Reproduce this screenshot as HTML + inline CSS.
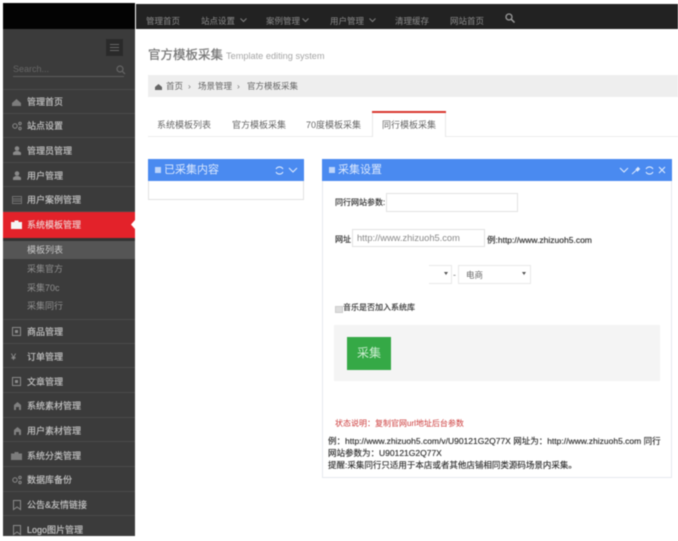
<!DOCTYPE html>
<html lang="zh"><head><meta charset="utf-8"><title>官方模板采集</title>
<style>
html,body{margin:0;padding:0;background:#fff}
body{width:678px;height:536px;overflow:hidden;position:relative;font-family:"Liberation Sans","Noto Sans CJK SC",sans-serif;}
#w{position:absolute;inset:0;filter:blur(.6px)}
.a{position:absolute;white-space:nowrap}
.m{position:absolute;left:3px;width:132px;height:24px;border-bottom:1px solid #4a4a4a;box-sizing:border-box}
.t{position:absolute;white-space:nowrap;left:27px;font-size:9px;line-height:12px;color:#c2c2c2;text-shadow:0 0 .5px #c2c2c2}
.s{position:absolute;white-space:nowrap;left:27px;font-size:9px;line-height:12px;color:#8f8f8f}
.n{position:absolute;top:11px;font-size:8.500px;line-height:12px;color:#8a8a8a;white-space:nowrap}
svg{position:absolute;overflow:visible}
.i{fill:none;stroke:#8a8a8a;stroke-width:1}
.v{fill:none;stroke:#808080;stroke-width:1}
.tab{position:absolute;top:119px;font-size:9px;line-height:12px;color:#666;white-space:nowrap}
.h{position:absolute;background:#4a8af0;top:159px;height:22px}
.l{position:absolute;font-size:8px;line-height:12px;color:#333;white-space:nowrap;text-shadow:0 0 .5px #555}
.box{position:absolute;background:#fff;border:1px solid #e2e2e2;box-sizing:border-box}
</style></head><body><div id="w">
<div class="a" style="left:3px;top:29px;width:132px;height:507px;background:#3b3b3b"></div>
<div class="a" style="left:3px;top:3px;width:132px;height:26px;background:#030303"></div>
<div class="a" style="left:136px;top:4px;width:542px;height:25px;background:#222"></div>
<div class="a" style="left:106px;top:39px;width:17px;height:17px;background:#2a2a2a"></div>
<div class="a" style="left:110px;top:44px;width:9px;height:7px;border-top:1px solid #666;border-bottom:1px solid #666;box-sizing:border-box"></div>
<div class="a" style="left:110px;top:47px;width:9px;height:1px;background:#666"></div>
<div class="a" style="left:13px;top:63px;font-size:9px;line-height:12px;color:#666">Search...</div>
<div class="a" style="left:13px;top:76px;width:111px;height:1px;background:#5c5c5c"></div>
<svg style="left:116px;top:65px" width="9" height="9"><circle cx="4" cy="4" r="3" fill="none" stroke="#666" stroke-width="1.200"/><path d="M6 6l3 3" stroke="#666" stroke-width="1.200"/></svg>
<div class="a" style="left:3px;top:89px;width:132px;height:1px;background:#4a4a4a"></div>

<div class="m" style="top:90px"><svg style="left:9px;top:9px" width="9" height="7"><path d="M0 4L4.500 0L9 4V7H0Z" fill="#7c7c7c"/></svg></div><div class="t" style="top:96px">管理首页</div>
<div class="m" style="top:114px"><svg style="left:9px;top:8px" width="10" height="8"><circle cx="3" cy="4" r="2.200" class="i"/><circle cx="8" cy="1.500" r="1.200" class="i"/><circle cx="8" cy="6.500" r="1.200" class="i"/></svg></div><div class="t" style="top:120px">站点设置</div>
<div class="m" style="top:139px"><svg style="left:10px;top:7px" width="8" height="9"><circle cx="4" cy="2.500" r="2.300" fill="#8a8a8a"/><path d="M0 9V6.500L2.500 5H5.500L8 6.500V9Z" fill="#8a8a8a"/></svg></div><div class="t" style="top:145px">管理员管理</div>
<div class="m" style="top:163px"><svg style="left:10px;top:8px" width="8" height="9"><circle cx="4" cy="2.500" r="2.300" fill="#8a8a8a"/><path d="M0 9V6.500L2.500 5H5.500L8 6.500V9Z" fill="#8a8a8a"/></svg></div><div class="t" style="top:170px">用户管理</div>
<div class="m" style="top:188px"><svg style="left:9px;top:8px" width="10" height="8"><rect x=".5" y=".5" width="9" height="7" fill="none" stroke="#707070"/><path d="M.5 3h9M.5 5h9" stroke="#707070"/></svg></div><div class="t" style="top:194px">用户案例管理</div>
<div class="a" style="left:3px;top:212px;width:132px;height:26px;background:#e3222a"></div>
<svg style="left:11px;top:220px" width="11" height="9"><path d="M0 2H3.500V.5H7.500V2H11V9H0Z" fill="#f4f4f4"/></svg>
<div class="t" style="top:219px;color:#eec8c8;text-shadow:0 0 .5px #eec8c8">系统模板管理</div>
<svg style="left:131px;top:220px" width="4" height="9"><path d="M4 0L0 4.500L4 9Z" fill="#fff"/></svg>
<div class="a" style="left:3px;top:238px;width:132px;height:3px;background:#333"></div>
<div class="a" style="left:3px;top:241px;width:132px;height:18px;background:#555"></div>
<div class="s" style="top:244px;color:#c8c8c8">模板列表</div>
<div class="s" style="top:263px">采集官方</div>
<div class="s" style="top:282px">采集70c</div>
<div class="s" style="top:300px">采集同行</div>
<div class="a" style="left:3px;top:319px;width:132px;height:1px;background:#4a4a4a"></div>
<div class="m" style="top:320px"><svg style="left:9px;top:7px" width="9" height="9"><rect x=".5" y=".5" width="8" height="8" class="i"/><rect x="3" y="3" width="3" height="3" fill="#8a8a8a"/></svg></div><div class="t" style="top:326px">商品管理</div>
<div class="m" style="top:344px"><div class="a" style="left:8px;top:7px;font-size:9px;line-height:12px;color:#999">¥</div></div><div class="t" style="top:351px">订单管理</div>
<div class="m" style="top:369px"><svg style="left:9px;top:8px" width="9" height="9"><rect x=".5" y=".5" width="8" height="8" class="i"/><rect x="3" y="3" width="3" height="3" fill="#8a8a8a"/></svg></div><div class="t" style="top:376px">文章管理</div>
<div class="m" style="top:394px"><svg style="left:10px;top:8px" width="9" height="8"><path d="M1 8V3L4.500 0L8 3V8H6V5H3V8Z" fill="#808080"/></svg></div><div class="t" style="top:400px">系统素材管理</div>
<div class="m" style="top:418px"><svg style="left:10px;top:9px" width="9" height="8"><path d="M1 8V3L4.500 0L8 3V8H6V5H3V8Z" fill="#808080"/></svg></div><div class="t" style="top:425px">用户素材管理</div>
<div class="m" style="top:443px"><svg style="left:8px;top:9px" width="11" height="8"><path d="M0 1.500H3.500V0H7.500V1.500H11V8H0Z" fill="#7c7c7c"/></svg></div><div class="t" style="top:450px">系统分类管理</div>
<div class="m" style="top:468px"><svg style="left:9px;top:8px" width="10" height="8"><circle cx="3" cy="4" r="2.200" class="i"/><circle cx="8" cy="1.500" r="1.200" class="i"/><circle cx="8" cy="6.500" r="1.200" class="i"/></svg></div><div class="t" style="top:474px">数据库备份</div>
<div class="m" style="top:492px"><svg style="left:10px;top:8px" width="8" height="10"><path d="M.5.500H7.500V9.500L4 7L.5 9.500Z" class="i"/></svg></div><div class="t" style="top:499px">公告&amp;友情链接</div>
<div class="m" style="top:517px;border:0"><svg style="left:10px;top:8px" width="8" height="10"><path d="M.5.500H7.500V9.500L4 7L.5 9.500Z" class="i"/></svg></div><div class="t" style="top:524px">Logo图片管理</div>

<div class="a" style="left:136px;top:4px;width:542px;height:25px">
<div class="n" style="left:10px">管理首页</div>
<div class="n" style="left:65px">站点设置</div><svg style="left:104px;top:14px" width="7" height="5"><path d="M.5.500L3.500 3.500L6.500.5" class="v"/></svg>
<div class="n" style="left:130px">案例管理</div><svg style="left:166px;top:14px" width="7" height="5"><path d="M.5.500L3.500 3.500L6.500.5" class="v"/></svg>
<div class="n" style="left:194px">用户管理</div><svg style="left:233px;top:14px" width="7" height="5"><path d="M.5.500L3.500 3.500L6.500.5" class="v"/></svg>
<div class="n" style="left:259px">清理缓存</div>
<div class="n" style="left:314px">网站首页</div>
<svg style="left:369px;top:9px" width="10" height="10"><circle cx="4" cy="4" r="3" fill="none" stroke="#999" stroke-width="1.300"/><path d="M6.200 6.200L9.500 9.500" stroke="#999" stroke-width="1.500"/></svg>
</div>

<div class="a" style="left:148px;top:45px;font-size:12.500px;line-height:20px;color:#777;text-shadow:0 0 .6px #777">官方模板采集</div>
<div class="a" style="left:226px;top:46px;font-size:9.200px;line-height:20px;color:#a5a5a5">Template editing system</div>
<div class="a" style="left:148px;top:75px;width:530px;height:22px;background:#eee"></div>
<svg style="left:155px;top:84px" width="7" height="6"><path d="M0 3L3.500 0L7 3V6H0Z" fill="#666"/></svg>
<div class="a" style="left:166px;top:80px;font-size:8.500px;line-height:12px;color:#666">首页</div>
<div class="a" style="left:188px;top:80px;font-size:8.500px;line-height:12px;color:#777">›</div>
<div class="a" style="left:198px;top:80px;font-size:8.500px;line-height:12px;color:#666">场景管理</div>
<div class="a" style="left:237px;top:80px;font-size:8.500px;line-height:12px;color:#777">›</div>
<div class="a" style="left:247px;top:80px;font-size:8.500px;line-height:12px;color:#666">官方模板采集</div>

<div class="a" style="left:148px;top:136px;width:530px;height:1px;background:#ececec"></div>
<div class="tab" style="left:157px">系统模板列表</div>
<div class="tab" style="left:232px">官方模板采集</div>
<div class="tab" style="left:306px">70度模板采集</div>
<div class="a" style="left:372px;top:111px;width:74px;height:26px;background:#fff;border:1px solid #e8e8e8;border-top:0;border-bottom:0;box-sizing:border-box"></div>
<div class="a" style="left:372px;top:111px;width:74px;height:2px;background:#d9372f"></div>
<div class="tab" style="left:382px">同行模板采集</div>

<div class="box" style="left:148px;top:159px;width:156px;height:41px"></div>
<div class="h" style="left:148px;width:156px"></div>
<div class="a" style="left:155px;top:167px;width:6px;height:6px;background:#bcd4fa"></div>
<div class="a" style="left:164px;top:162px;font-size:11px;line-height:16px;color:#dbe8fd">已采集内容</div>
<svg style="left:275px;top:166px" width="9" height="9"><path d="M8 3A4 4 0 0 0 1 3M1 6A4 4 0 0 0 8 6" fill="none" stroke="#dbe8fd" stroke-width="1.100"/></svg>
<svg style="left:288px;top:167px" width="10" height="6"><path d="M1 1L5 5L9 1" fill="none" stroke="#dbe8fd" stroke-width="1.100"/></svg>

<div class="box" style="left:322px;top:159px;width:350px;height:319px;border-color:#e6e9ee"></div>
<div class="h" style="left:322px;width:350px"></div>
<div class="a" style="left:329px;top:167px;width:6px;height:6px;background:#bcd4fa"></div>
<div class="a" style="left:338px;top:162px;font-size:11px;line-height:16px;color:#dbe8fd">采集设置</div>
<svg style="left:619px;top:167px" width="10" height="6"><path d="M1 1L5 5L9 1" fill="none" stroke="#dbe8fd" stroke-width="1.100"/></svg>
<svg style="left:632px;top:167px" width="8" height="7"><path d="M0 7L4 3.500M5 1L7 3M4 2.500L6 .5L7.500 2L5.500 4Z" fill="#dbe8fd" stroke="#dbe8fd"/></svg>
<svg style="left:645px;top:166px" width="9" height="9"><path d="M8 3A4 4 0 0 0 1 3M1 6A4 4 0 0 0 8 6" fill="none" stroke="#dbe8fd" stroke-width="1.100"/></svg>
<svg style="left:658px;top:166px" width="8" height="8"><path d="M1 1L7 7M7 1L1 7" fill="none" stroke="#dbe8fd" stroke-width="1.100"/></svg>

<div class="l" style="left:335px;top:197px">同行网站参数:</div>
<div class="box" style="left:386px;top:193px;width:132px;height:19px"></div>
<div class="l" style="left:335px;top:234px">网址</div>
<div class="box" style="left:352px;top:229px;width:133px;height:18px"></div>
<div class="a" style="left:357px;top:232px;font-size:9.300px;line-height:12px;color:#888">http://www.zhizuoh5.com</div>
<div class="l" style="left:487px;top:234px;font-size:8.500px">例:http://www.zhizuoh5.com</div>

<div class="a" style="left:429px;top:265px;width:23px;height:19px;background:#fff;border:1px solid #e8e8e8;border-left:0;box-sizing:border-box"></div>
<div class="a" style="left:444px;top:272px;border:2.500px solid transparent;border-top:3px solid #555;border-bottom:0"></div>
<div class="a" style="left:453px;top:269px;font-size:9px;line-height:12px;color:#777">-</div>
<div class="box" style="left:458px;top:265px;width:73px;height:19px;border-color:#e8e8e8"></div>
<div class="a" style="left:466px;top:269px;font-size:8.500px;line-height:12px;color:#666">电商</div>
<div class="a" style="left:522px;top:272px;border:2.500px solid transparent;border-top:3px solid #555;border-bottom:0"></div>

<div class="a" style="left:335px;top:306px;width:8px;height:7px;background:#ddd;border:1px solid #ccc;box-sizing:border-box"></div>
<div class="l" style="left:343px;top:302px">音乐是否加入系统库</div>

<div class="a" style="left:334px;top:325px;width:326px;height:56px;background:#f4f4f4"></div>
<div class="a" style="left:347px;top:337px;width:44px;height:33px;background:#35a946;color:#cdeed2;font-size:12px;line-height:33px;text-align:center">采集</div>

<div class="a" style="left:335px;top:418px;font-size:8px;line-height:12px;color:#cc3a3a">状态说明：复制官网url地址后台参数</div>
<div class="a" style="left:328px;top:435px;width:338px;font-size:8.500px;line-height:12px;color:#333;white-space:normal;text-shadow:0 0 .4px #555">例：http://www.zhizuoh5.com/v/U90121G2Q77X 网址为：http://www.zhizuoh5.com 同行网站参数为：U90121G2Q77X<br>提醒:采集同行只适用于本店或者其他店铺相同类源码场景内采集。</div>
</div></body></html>
